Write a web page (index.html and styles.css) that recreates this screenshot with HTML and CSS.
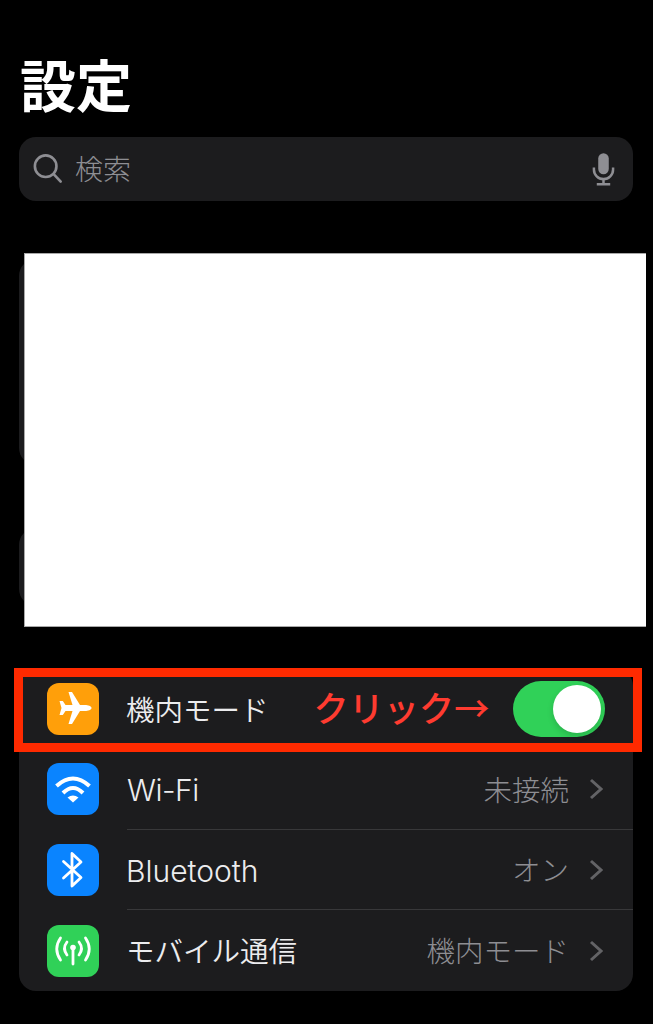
FILE: index.html
```html
<!DOCTYPE html>
<html lang="ja">
<head>
<meta charset="utf-8">
<title>設定</title>
<link rel="stylesheet" href="styles.css">
</head>
<body>
<main class="page">
  <h1 class="title">設定</h1>
  <div class="search">
    <svg class="search-icon" viewBox="0 0 32 32"><circle cx="13.5" cy="13" r="11.5"/><path d="M22 21.5 29.5 29.5"/></svg>
    <span class="search-text">検索</span>
    <svg class="mic" viewBox="0 0 24 34"><rect x="6.5" y="0" width="11" height="22" rx="5.5"/><path class="mic-line" d="M2 15v2a10 10 0 0 0 20 0v-2M12 27v5M5 32.5h14"/></svg>
  </div>
  <section class="hidden-groups">
    <div class="card card-a"></div>
    <div class="card card-b"></div>
    <div class="redaction"></div>
  </section>
  <section class="group">
    <div class="frame"></div>
    <span class="annotation">クリック→</span>
    <div class="row">
      <span class="icon orange"><svg viewBox="0 0 52 52"><path class="fill" d="M44.5 25C44.5 26.8 41 28 38 28H33L25 41H21.5L25.5 28H18.5L15.8 32H12.5L14.5 25 12.5 18H15.8L18.5 22H25.5L21.5 9H25L33 22H38C41 22 44.5 23.2 44.5 25Z"/></svg></span>
      <div class="row-body no-line">
        <span class="label cjk-up">機内モード</span>
        <span class="toggle"><span class="knob"></span></span>
      </div>
    </div>
    <div class="row">
      <span class="icon blue"><svg viewBox="0 0 52 52"><path class="stroke thick" d="M9.5 23Q26 8 42.5 23M16 30Q26 20 36 30"/><path class="fill" d="M20.5 34.5Q26 30.5 31.5 34.5L26 39.5Z"/></svg></span>
      <div class="row-body no-line">
        <span class="label latin wifi">Wi-Fi</span>
        <span class="value">未接続</span>
        <svg class="chev" viewBox="0 0 14 22"><path d="M2 2 12 11 2 20"/></svg>
      </div>
    </div>
    <div class="row">
      <span class="icon blue icon-low"><svg viewBox="0 0 52 52"><path class="stroke" d="M16.5 17.5 34 33.5 25 42V9.5L34 18 16.5 34"/></svg></span>
      <div class="row-body">
        <span class="label latin bt">Bluetooth</span>
        <span class="value">オン</span>
        <svg class="chev" viewBox="0 0 14 22"><path d="M2 2 12 11 2 20"/></svg>
      </div>
    </div>
    <div class="row row-last">
      <span class="icon green icon-low"><svg viewBox="0 0 52 52"><circle class="fill" cx="26" cy="22.5" r="2.8"/><path class="stroke" d="M26 23V39M13.5 13Q6 24 13.5 35M38.5 13Q46 24 38.5 35M20 17Q15 23.5 20 30M32 17Q37 23.5 32 30"/></svg></span>
      <div class="row-body">
        <span class="label cjk-up">モバイル通信</span>
        <span class="value">機内モード</span>
        <svg class="chev" viewBox="0 0 14 22"><path d="M2 2 12 11 2 20"/></svg>
      </div>
    </div>
  </section>
</main>
</body>
</html>
```

FILE: styles.css
```css
* { box-sizing: border-box; }
html, body { margin: 0; background: #000; }
body {
  width: 653px;
  height: 1024px;
  overflow: hidden;
  font-family: Inter, "Noto Sans CJK JP", sans-serif;
  color: #fff;
}
.page { padding: 49px 20px 33px 19px; }
.title {
  margin: 0 0 0 1px;
  height: 88px;
  font-size: 56px;
  line-height: 68px;
  font-weight: 700;
  font-family: "Noto Sans CJK JP", sans-serif;
}
.search {
  display: flex;
  align-items: center;
  height: 64px;
  background: #1c1c1e;
  border-radius: 17px;
  padding: 0 18px 0 14px;
}
.search-icon { width: 30px; height: 30px; flex: none; }
.search-icon circle, .search-icon path { fill: none; stroke: #8e8e93; stroke-width: 2.8; stroke-linecap: round; }
.search-text {
  margin: 0 0 3px 12px;
  flex: 1;
  font-size: 28px;
  color: #8e8e93;
  font-weight: 300;
  font-family: "Noto Sans CJK JP", sans-serif;
}
.mic { width: 23px; height: 33px; flex: none; }
.mic rect { fill: #8e8e93; }
.mic-line { fill: none; stroke: #8e8e93; stroke-width: 2.6; }
.hidden-groups {
  position: relative;
  margin-top: 58px;
  display: flex;
  flex-direction: column;
  gap: 63px;
}
.card { background: #1c1c1e; border-radius: 17px; }
.card-a { height: 206px; }
.card-b { height: 78px; }
.redaction {
  position: absolute;
  left: 5px;
  top: -6px;
  width: 622px;
  height: 374px;
  background: #fff;
  border: 1px solid #a8a8a8;
  border-right: 0;
}
.group {
  position: relative;
  margin-top: 63px;
  background: #1c1c1e;
  border-radius: 17px;
}
.frame {
  position: absolute;
  left: -5px;
  top: -1px;
  width: 628px;
  height: 84px;
  border: 9.5px solid #ff2a00;
  pointer-events: none;
}
.annotation {
  position: absolute;
  left: 294.5px;
  top: 12px;
  font-size: 35.2px;
  line-height: 52px;
  font-weight: 500;
  color: #ff3b30;
  font-family: "Noto Sans CJK JP", sans-serif;
}
.row {
  display: flex;
  align-items: center;
  height: 80px;
  padding-left: 28px;
}
.row-last { height: 82px; }
.icon {
  flex: none;
  width: 52px;
  height: 52px;
  border-radius: 12px;
  display: block;
}
.icon-low { margin-top: 2px; }
.icon svg { display: block; width: 52px; height: 52px; }
.orange { background: #ff9f0a; }
.blue { background: #0a84ff; }
.green { background: #30d158; }
.fill { fill: #fff; }
.stroke { fill: none; stroke: #fff; stroke-width: 2.8; stroke-linecap: round; stroke-linejoin: round; }
.thick { stroke-width: 4; stroke-linecap: butt; }
.row-body {
  flex: 1;
  align-self: stretch;
  margin-left: 28px;
  display: flex;
  align-items: center;
  border-top: 1px solid #38383a;
  padding-right: 30px;
}
.no-line { border-top: 0; }
.label {
  flex: 1;
  font-size: 28.5px;
  font-weight: 350;
  color: #ececee;
  margin-left: -1px;
}
.cjk-up { margin-top: -2px; }
.latin { font-size: 30px; letter-spacing: 0; margin-left: 0; }
.wifi { letter-spacing: -0.5px; margin-top: 2px; }
.bt { margin-left: -1px; margin-top: 2px; }
.value {
  font-size: 28.5px;
  font-weight: 300;
  color: #8e8e93;
  margin: -2px 20px 0 0;
}
.chev { width: 14px; height: 22px; flex: none; }
.chev path { fill: none; stroke: #636366; stroke-width: 3; }
.toggle {
  flex: none;
  position: relative;
  width: 92px;
  height: 56px;
  margin-right: -2px;
  border-radius: 28px;
  background: #30d158;
}
.knob {
  position: absolute;
  right: 4px;
  top: 4px;
  width: 48px;
  height: 48px;
  border-radius: 50%;
  background: #fff;
  box-shadow: 0 3px 6px rgba(0,0,0,.15);
}
```
